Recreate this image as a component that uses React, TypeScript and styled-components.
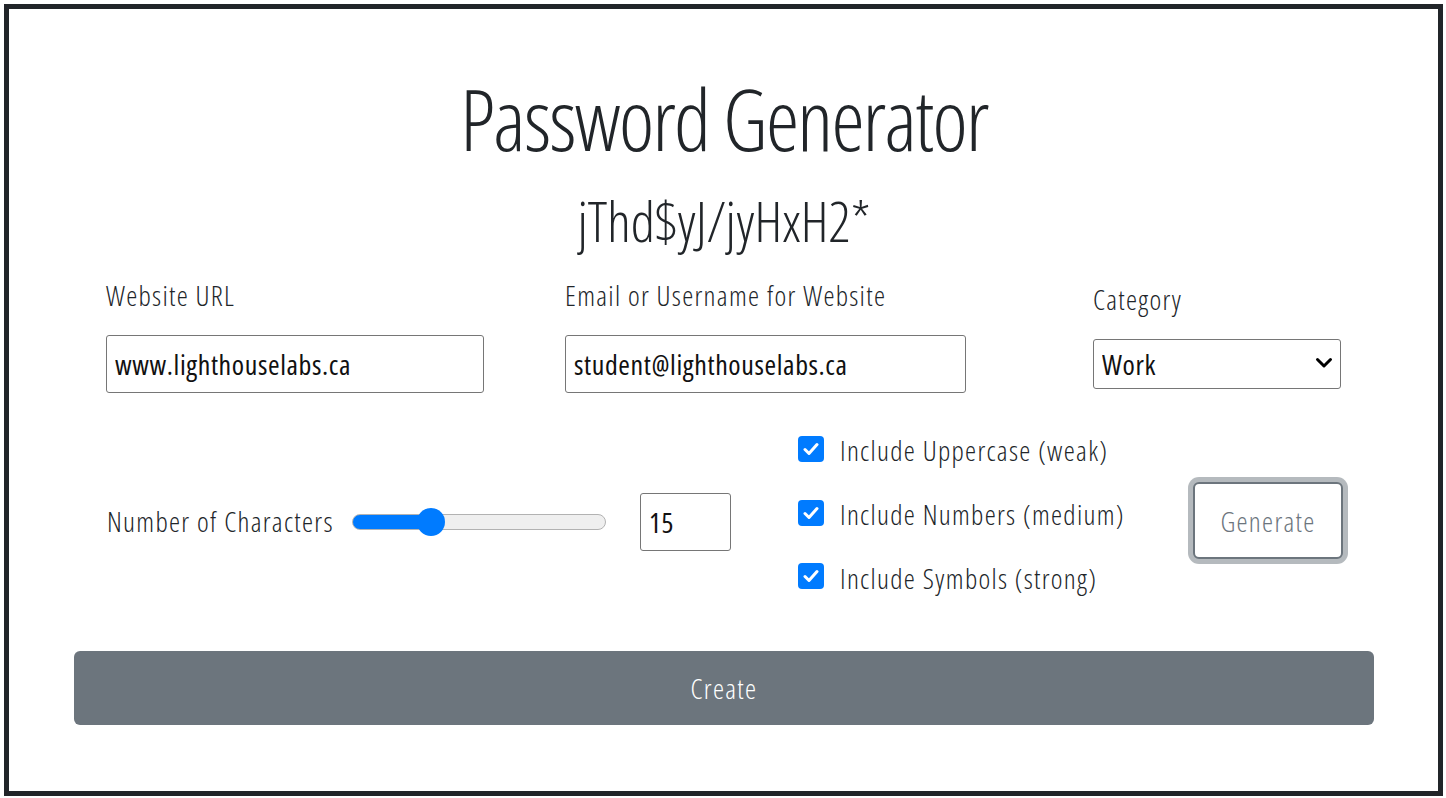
import React, { useState } from 'react';
import styled, { createGlobalStyle } from 'styled-components';

const GlobalStyle = createGlobalStyle`
  html, body {
    margin: 0;
    padding: 0;
    background: #ffffff;
  }
  body {
    font-family: "Open Sans", "Liberation Sans", sans-serif;
    font-stretch: 75%;
    font-weight: 300;
    letter-spacing: 1.3px;
    color: #212529;
  }
  * { box-sizing: border-box; }
`;

const Frame = styled.div`
  margin: 4px 0 0 4px;
  width: 1439px;
  height: 792px;
  border: 5px solid #212529;
  background: #ffffff;
  display: flex;
  flex-direction: column;
  padding: 60px 64px 0 65px;
`;

const Title = styled.h1`
  margin: 0;
  font-size: 84px;
  font-weight: 300;
  letter-spacing: -1.7px;
  line-height: 1.2;
  text-align: center;
`;

const Password = styled.p`
  margin: 18px 0 0;
  font-size: 55px;
  font-weight: 300;
  letter-spacing: 0;
  line-height: 1.2;
  text-align: center;
`;

const FieldsRow = styled.div`
  display: grid;
  grid-template-columns: 459px 528px 248px;
  align-items: center;
  margin-top: 25px;
  padding: 0 32px;
`;

const Field = styled.div`
  display: flex;
  flex-direction: column;
  gap: 23px;
`;

const Label = styled.label`
  font-size: 28px;
  line-height: 1.2;
  font-weight: 300;
`;

const TextInput = styled.input<{ $w: number; $h?: number }>`
  width: ${(p) => p.$w}px;
  height: ${(p) => p.$h ?? 58}px;
  border: 1px solid #767676;
  border-radius: 3px;
  padding: 0 8px;
  font-family: inherit;
  font-stretch: 75%;
  font-size: 28px;
  font-weight: 400;
  letter-spacing: 0.6px;
  color: #111;
  background: #fff;
  outline: none;
`;

const SelectWrap = styled.div`
  position: relative;
  width: 248px;
  height: 50px;
`;

const Select = styled.select`
  appearance: none;
  -webkit-appearance: none;
  width: 100%;
  height: 100%;
  border: 1px solid #767676;
  border-radius: 3px;
  padding: 0 8px;
  font-family: inherit;
  font-stretch: 75%;
  font-size: 28px;
  font-weight: 400;
  letter-spacing: 0.6px;
  color: #111;
  background: #fff;
  outline: none;
`;

const Chevron = styled.svg`
  position: absolute;
  right: 8px;
  top: 17px;
  pointer-events: none;
`;

const OptionsRow = styled.div`
  display: grid;
  grid-template-columns: 692px 395px auto;
  align-items: center;
  margin-top: 41px;
  padding: 0 32px;
`;

const LengthControl = styled.div`
  display: flex;
  align-items: center;
`;

const LengthLabel = styled(Label)`
  width: 246px;
  padding-left: 1px;
`;

const Range = styled.input`
  -webkit-appearance: none;
  appearance: none;
  width: 254px;
  height: 16px;
  margin: 0 34px 0 0;
  border: 1px solid #b2b2b2;
  border-radius: 8px;
  outline: none;

  &::-webkit-slider-thumb {
    -webkit-appearance: none;
    width: 28px;
    height: 28px;
    border-radius: 50%;
    background: #007bff;
    border: none;
  }
`;

const CheckGroup = styled.div`
  display: flex;
  flex-direction: column;
  gap: 30px;
  padding-bottom: 14px;
`;

const CheckRow = styled.label`
  display: flex;
  align-items: center;
  gap: 16px;
  font-size: 28px;
  line-height: 1.2;
  font-weight: 300;
`;

const Box = styled.span`
  width: 26px;
  height: 26px;
  border-radius: 4px;
  background: #007bff;
  display: flex;
  align-items: center;
  justify-content: center;
  margin-top: -4px;
`;

const GenerateButton = styled.button`
  width: 150px;
  height: 77px;
  border: 2px solid #6c757d;
  border-radius: 6px;
  background: #fff;
  box-shadow: 0 0 0 5px rgba(108, 117, 125, 0.5);
  color: #6c757d;
  font-family: inherit;
  font-stretch: 75%;
  font-size: 28px;
  font-weight: 300;
  letter-spacing: 1.3px;
  margin-bottom: 2px;
`;

const CreateButton = styled.button`
  margin-top: 42px;
  width: 1300px;
  height: 74px;
  border: none;
  border-radius: 6px;
  background: #6c757d;
  color: #fff;
  font-family: inherit;
  font-stretch: 75%;
  font-size: 28px;
  font-weight: 300;
  letter-spacing: 1.3px;
`;

const Check = () => (
  <svg width="16" height="14" viewBox="0 0 16 14">
    <path d="M2 7.5 L6 11.5 L14 2.5" fill="none" stroke="#fff" strokeWidth="3" strokeLinecap="round" strokeLinejoin="round" />
  </svg>
);

const options = ['Include Uppercase (weak)', 'Include Numbers (medium)', 'Include Symbols (strong)'];

const MIN = 5;
const MAX = 40;

export default function App() {
  const [length, setLength] = useState(15);
  const frac = (length - MIN) / (MAX - MIN);
  const pct = ((14 + frac * 226) / 254) * 100;

  return (
    <>
      <GlobalStyle />
      <Frame>
        <Title>Password Generator</Title>
        <Password>jThd$yJ/jyHxH2*</Password>

        <FieldsRow>
          <Field>
            <Label>Website URL</Label>
            <TextInput $w={378} defaultValue="www.lighthouselabs.ca" />
          </Field>
          <Field>
            <Label>Email or Username for Website</Label>
            <TextInput $w={401} defaultValue="student@lighthouselabs.ca" />
          </Field>
          <Field>
            <Label>Category</Label>
            <SelectWrap>
              <Select defaultValue="Work">
                <option>Work</option>
                <option>Personal</option>
                <option>Social</option>
              </Select>
              <Chevron width="18" height="14" viewBox="0 0 18 14">
                <path d="M2.5 3.5 L9 10 L15.5 3.5" fill="none" stroke="#000" strokeWidth="3" strokeLinecap="round" strokeLinejoin="round" />
              </Chevron>
            </SelectWrap>
          </Field>
        </FieldsRow>

        <OptionsRow>
          <LengthControl>
            <LengthLabel>Number of Characters</LengthLabel>
            <Range
              type="range"
              min={MIN}
              max={MAX}
              value={length}
              onChange={(e) => setLength(Number(e.target.value))}
              style={{ background: `linear-gradient(to right, #007bff ${pct}%, #efefef ${pct}%)` }}
            />
            <TextInput $w={91} type="number" value={length} onChange={(e) => setLength(Number(e.target.value))} />
          </LengthControl>
          <CheckGroup>
            {options.map((o) => (
              <CheckRow key={o}>
                <Box>
                  <Check />
                </Box>
                {o}
              </CheckRow>
            ))}
          </CheckGroup>
          <GenerateButton>Generate</GenerateButton>
        </OptionsRow>

        <CreateButton>Create</CreateButton>
      </Frame>
    </>
  );
}
